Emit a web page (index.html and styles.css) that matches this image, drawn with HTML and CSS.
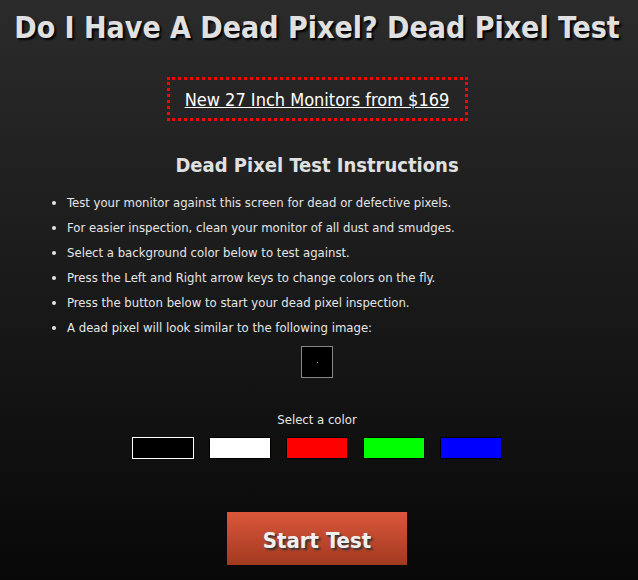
FILE: index.html
```html
<!DOCTYPE html>
<html lang="en">
<head>
    <meta charset="UTF-8">
    <meta name="viewport" content="width=device-width, initial-scale=1.0">
    <title>Dead Pixel Test</title>
    <link rel="stylesheet" href="styles.css">
</head>
<body>

<h1 class="title">Do I Have A Dead Pixel? Dead Pixel Test</h1>

<div class="ad">
    <a href="#">New 27 Inch Monitors from $169</a>
</div>

<h2 class="instr-title">Dead Pixel Test Instructions</h2>

<ul class="instructions">
    <li>Test your monitor against this screen for dead or defective pixels.</li>
    <li>For easier inspection, clean your monitor of all dust and smudges.</li>
    <li>Select a background color below to test against.</li>
    <li>Press the Left and Right arrow keys to change colors on the fly.</li>
    <li>Press the button below to start your dead pixel inspection.</li>
    <li>A dead pixel will look similar to the following image:</li>
</ul>

<div class="sample">
    <div class="sample-box"><span class="dot"></span></div>
</div>

<p class="select-label">Select a color</p>

<div class="swatches">
    <span class="swatch black selected"></span>
    <span class="swatch white"></span>
    <span class="swatch red"></span>
    <span class="swatch green"></span>
    <span class="swatch blue"></span>
</div>

<div class="start-wrap">
    <button class="start">Start Test</button>
</div>

</body>
</html>
```

FILE: styles.css
```css
html {
    height: 100%;
}
body {
    font-family: Tahoma, "DejaVu Sans Condensed", "DejaVu Sans", sans-serif;
    margin: 0;
    padding: 0 4px 0 0;
    min-height: 100%;
    color: #e6e6e6;
    background: linear-gradient(#2b2b2b, #080808);
    overflow: hidden;
}
.title {
    font-size: 30px;
    font-weight: bold;
    text-align: center;
    margin: 0;
    padding-top: 10px;
    color: #e0e0e0;
    text-shadow: 2px 2px 2px #000;
}
.ad {
    width: 295px;
    margin: 32px auto 0;
    padding: 9px 0 8px;
    border: 3px dotted #f00;
    text-align: center;
}
.ad a {
    color: #fff;
    font-size: 18px;
}
.instr-title {
    font-size: 20px;
    font-weight: bold;
    text-align: center;
    margin: 32px 0 0;
    color: #e0e0e0;
}
.instructions {
    margin: 13px 0 0;
    padding-left: 67px;
    font-size: 13px;
    color: #e6e6e6;
}
.instructions li {
    line-height: 25px;
}
.sample {
    display: flex;
    justify-content: center;
    margin-top: 6px;
}
.sample-box {
    width: 30px;
    height: 30px;
    border: 1px solid #888;
    background: #000;
    display: flex;
    align-items: center;
    justify-content: center;
}
.dot {
    width: 1px;
    height: 1px;
    background: #aaa;
}
.select-label {
    text-align: center;
    font-size: 13px;
    margin: 34px 0 0;
}
.swatches {
    display: flex;
    justify-content: center;
    gap: 15px;
    margin-top: 10px;
}
.swatch {
    width: 60px;
    height: 20px;
    border: 1px solid #000;
}
.swatch.selected {
    border-color: #fff;
}
.black { background: #000; }
.white { background: #fff; }
.red { background: #f00; }
.green { background: #0f0; }
.blue { background: #00f; }
.start-wrap {
    display: flex;
    justify-content: center;
    margin-top: 53px;
}
.start {
    width: 180px;
    height: 53px;
    padding: 3px 0 0;
    border: 0;
    background: linear-gradient(#db573b, #a2391f);
    color: #f0f0f0;
    font-family: inherit;
    font-size: 22px;
    font-weight: bold;
    text-shadow: 2px 2px 2px #333;
    cursor: pointer;
}
```
